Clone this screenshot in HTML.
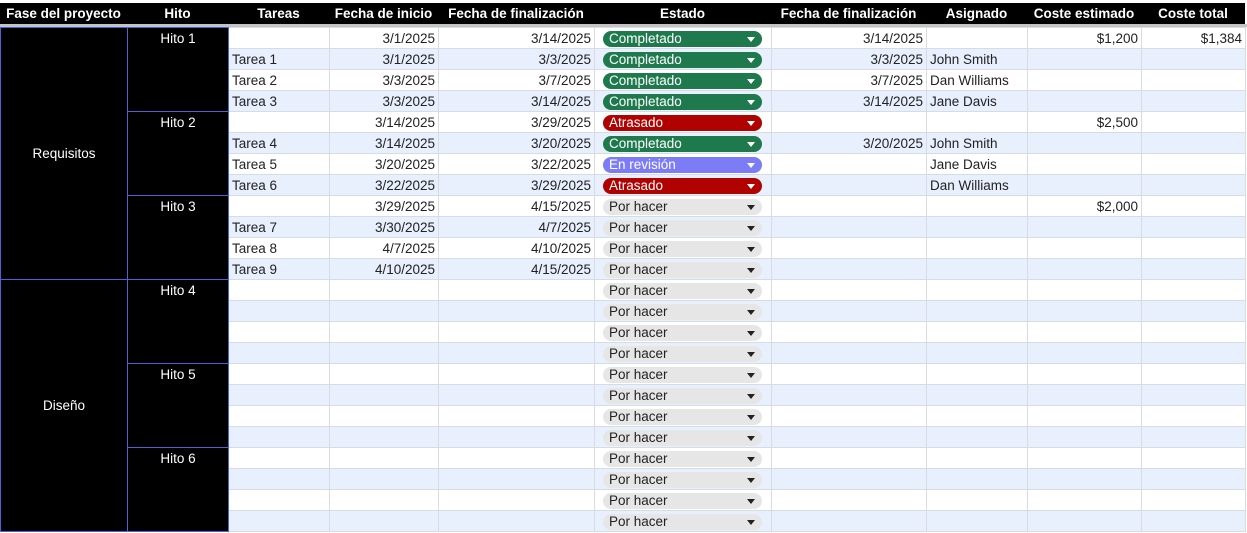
<!DOCTYPE html>
<html><head><meta charset="utf-8"><style>
*{margin:0;padding:0;box-sizing:border-box}
body{width:1247px;height:533px;overflow:hidden;background:#fff;font-family:"Liberation Sans",Arial,sans-serif;font-size:13.5px;color:#222;position:relative}
.hdr{position:absolute;left:0;top:3px;width:1245px;height:21px;background:#000}
.hdr div{position:absolute;top:0;height:21px;line-height:21px;color:#fff;font-weight:bold;font-size:13.5px;text-align:center}
.gbar{position:absolute;left:0;top:24px;width:1247px;height:3px;background:#c4c4c4}
table{position:absolute;left:0;top:27px;border-collapse:collapse;table-layout:fixed;width:1245px}
td{height:21px;border:1px solid #d7dbe4;padding:1px 3px 0;white-space:nowrap;overflow:hidden;line-height:19px}
tr:nth-child(even) td{background:#e8effd}
td.r{text-align:right}
.p{display:block;height:16px;border-radius:8px;margin:0 9px 0 8px;line-height:16px;padding-left:6px;position:relative;font-size:13.5px}
.p:after{content:"";position:absolute;right:7px;top:6px;border-left:4px solid transparent;border-right:4px solid transparent;border-top:5px solid currentColor}
.g{background:#1e7a4d;color:#fff}.x{background:#b10202;color:#fff}.v{background:#7c7cf6;color:#fff}.h{background:#e6e6e6;color:#222}
td.s{padding:1px 0 0}
.blk{position:absolute;background:#000;border:1px solid #4a63d6;color:#fff;text-align:center;font-size:13.5px}
</style></head><body>
<div class="hdr">
<div style="left:0;width:127px">Fase del proyecto</div>
<div style="left:127px;width:101px">Hito</div>
<div style="left:228px;width:101px">Tareas</div>
<div style="left:329px;width:109px">Fecha de inicio</div>
<div style="left:438px;width:156px">Fecha de finalización</div>
<div style="left:594px;width:177px">Estado</div>
<div style="left:771px;width:155px">Fecha de finalización</div>
<div style="left:926px;width:101px">Asignado</div>
<div style="left:1027px;width:114px">Coste estimado</div>
<div style="left:1141px;width:104px">Coste total</div>
</div>
<div class="gbar"></div>
<table>
<colgroup><col style="width:127px"><col style="width:101px"><col style="width:101px"><col style="width:109px"><col style="width:156px"><col style="width:177px"><col style="width:155px"><col style="width:101px"><col style="width:114px"><col style="width:104px"></colgroup>
<tr><td></td><td></td><td></td><td class="r">3/1/2025</td><td class="r">3/14/2025</td><td class="s"><span class="p g">Completado</span></td><td class="r">3/14/2025</td><td></td><td class="r">$1,200</td><td class="r">$1,384</td></tr>
<tr><td></td><td></td><td>Tarea 1</td><td class="r">3/1/2025</td><td class="r">3/3/2025</td><td class="s"><span class="p g">Completado</span></td><td class="r">3/3/2025</td><td>John Smith</td><td></td><td></td></tr>
<tr><td></td><td></td><td>Tarea 2</td><td class="r">3/3/2025</td><td class="r">3/7/2025</td><td class="s"><span class="p g">Completado</span></td><td class="r">3/7/2025</td><td>Dan Williams</td><td></td><td></td></tr>
<tr><td></td><td></td><td>Tarea 3</td><td class="r">3/3/2025</td><td class="r">3/14/2025</td><td class="s"><span class="p g">Completado</span></td><td class="r">3/14/2025</td><td>Jane Davis</td><td></td><td></td></tr>
<tr><td></td><td></td><td></td><td class="r">3/14/2025</td><td class="r">3/29/2025</td><td class="s"><span class="p x">Atrasado</span></td><td></td><td></td><td class="r">$2,500</td><td></td></tr>
<tr><td></td><td></td><td>Tarea 4</td><td class="r">3/14/2025</td><td class="r">3/20/2025</td><td class="s"><span class="p g">Completado</span></td><td class="r">3/20/2025</td><td>John Smith</td><td></td><td></td></tr>
<tr><td></td><td></td><td>Tarea 5</td><td class="r">3/20/2025</td><td class="r">3/22/2025</td><td class="s"><span class="p v">En revisión</span></td><td></td><td>Jane Davis</td><td></td><td></td></tr>
<tr><td></td><td></td><td>Tarea 6</td><td class="r">3/22/2025</td><td class="r">3/29/2025</td><td class="s"><span class="p x">Atrasado</span></td><td></td><td>Dan Williams</td><td></td><td></td></tr>
<tr><td></td><td></td><td></td><td class="r">3/29/2025</td><td class="r">4/15/2025</td><td class="s"><span class="p h">Por hacer</span></td><td></td><td></td><td class="r">$2,000</td><td></td></tr>
<tr><td></td><td></td><td>Tarea 7</td><td class="r">3/30/2025</td><td class="r">4/7/2025</td><td class="s"><span class="p h">Por hacer</span></td><td></td><td></td><td></td><td></td></tr>
<tr><td></td><td></td><td>Tarea 8</td><td class="r">4/7/2025</td><td class="r">4/10/2025</td><td class="s"><span class="p h">Por hacer</span></td><td></td><td></td><td></td><td></td></tr>
<tr><td></td><td></td><td>Tarea 9</td><td class="r">4/10/2025</td><td class="r">4/15/2025</td><td class="s"><span class="p h">Por hacer</span></td><td></td><td></td><td></td><td></td></tr>
<tr><td></td><td></td><td></td><td></td><td></td><td class="s"><span class="p h">Por hacer</span></td><td></td><td></td><td></td><td></td></tr>
<tr><td></td><td></td><td></td><td></td><td></td><td class="s"><span class="p h">Por hacer</span></td><td></td><td></td><td></td><td></td></tr>
<tr><td></td><td></td><td></td><td></td><td></td><td class="s"><span class="p h">Por hacer</span></td><td></td><td></td><td></td><td></td></tr>
<tr><td></td><td></td><td></td><td></td><td></td><td class="s"><span class="p h">Por hacer</span></td><td></td><td></td><td></td><td></td></tr>
<tr><td></td><td></td><td></td><td></td><td></td><td class="s"><span class="p h">Por hacer</span></td><td></td><td></td><td></td><td></td></tr>
<tr><td></td><td></td><td></td><td></td><td></td><td class="s"><span class="p h">Por hacer</span></td><td></td><td></td><td></td><td></td></tr>
<tr><td></td><td></td><td></td><td></td><td></td><td class="s"><span class="p h">Por hacer</span></td><td></td><td></td><td></td><td></td></tr>
<tr><td></td><td></td><td></td><td></td><td></td><td class="s"><span class="p h">Por hacer</span></td><td></td><td></td><td></td><td></td></tr>
<tr><td></td><td></td><td></td><td></td><td></td><td class="s"><span class="p h">Por hacer</span></td><td></td><td></td><td></td><td></td></tr>
<tr><td></td><td></td><td></td><td></td><td></td><td class="s"><span class="p h">Por hacer</span></td><td></td><td></td><td></td><td></td></tr>
<tr><td></td><td></td><td></td><td></td><td></td><td class="s"><span class="p h">Por hacer</span></td><td></td><td></td><td></td><td></td></tr>
<tr><td></td><td></td><td></td><td></td><td></td><td class="s"><span class="p h">Por hacer</span></td><td></td><td></td><td></td><td></td></tr>
</table>
<div class="blk" style="left:0;top:27px;width:128px;height:253px;line-height:251px">Requisitos</div>
<div class="blk" style="left:0;top:279px;width:128px;height:253px;line-height:251px">Diseño</div>
<div class="blk" style="left:127px;top:27px;width:102px;height:85px;line-height:21px">Hito 1</div>
<div class="blk" style="left:127px;top:111px;width:102px;height:85px;line-height:21px">Hito 2</div>
<div class="blk" style="left:127px;top:195px;width:102px;height:85px;line-height:21px">Hito 3</div>
<div class="blk" style="left:127px;top:279px;width:102px;height:85px;line-height:21px">Hito 4</div>
<div class="blk" style="left:127px;top:363px;width:102px;height:85px;line-height:21px">Hito 5</div>
<div class="blk" style="left:127px;top:447px;width:102px;height:85px;line-height:21px">Hito 6</div>
</body></html>
